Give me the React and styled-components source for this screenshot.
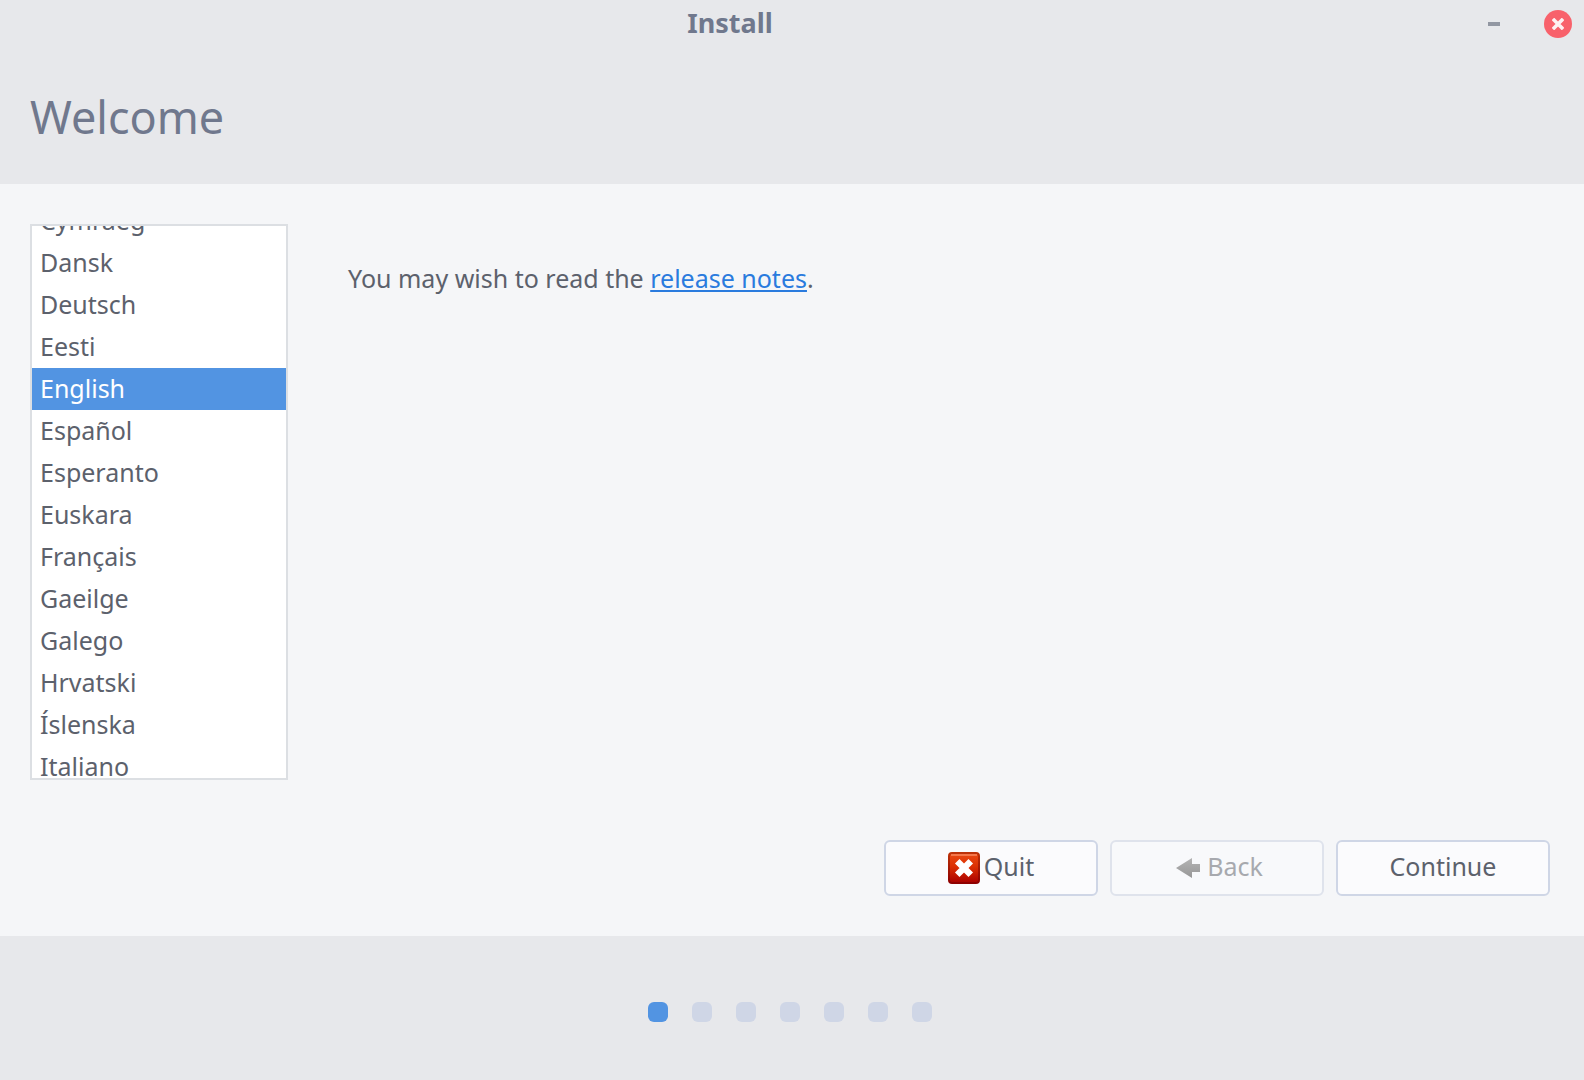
import React, { useLayoutEffect, useRef, useState } from 'react';
import styled, { createGlobalStyle } from 'styled-components';

const GlobalStyle = createGlobalStyle`
  *, *::before, *::after { box-sizing: border-box; }
  body {
    margin: 0;
    background: #f5f6f8;
    color: #5c616c;
    font: 25px/42px "Noto Sans", "Open Sans", sans-serif;
  }
`;

const Window = styled.div`
  display: flex;
  flex-direction: column;
  min-height: 100vh;
`;

const TitleBar = styled.header`
  display: flex;
  align-items: center;
  height: 48px;
  background: #e7e8eb;
`;

const WindowTitle = styled.div`
  flex: 1;
  padding-bottom: 2px;
  color: #70788d;
  font-size: 27px;
  font-weight: 700;
  text-align: center;
`;

const WindowControls = styled.div`
  display: flex;
  align-items: center;
  gap: 38px;
  padding: 0 12px 0 22px;
`;

const ControlButton = styled.button`
  display: flex;
  align-items: center;
  justify-content: center;
  width: ${({ $width }) => $width}px;
  height: 28px;
  margin: 0;
  padding: 0;
  border: 0;
  border-radius: 14px;
  background: ${({ $fill }) => $fill};
`;

const PageHeader = styled.div`
  display: flex;
  align-items: center;
  height: 136px;
  padding: 2px 30px 0;
  background: #e7e8eb;
`;

const PageTitle = styled.h1`
  margin: 0;
  color: #70788d;
  font-size: 45px;
  font-weight: 400;
  line-height: 64px;
`;

const Content = styled.main`
  display: flex;
  flex: 1;
  flex-direction: column;
  justify-content: space-between;
  gap: 60px;
  padding: 40px 34px 40px 30px;
`;

const Columns = styled.div`
  display: flex;
  gap: 60px;
`;

const LanguageList = styled.select`
  flex: none;
  width: 258px;
  height: 556px;
  margin: 0;
  padding: 0;
  overflow-y: auto;
  border: 2px solid #dcdfe3;
  border-radius: 0;
  outline: 0;
  background: #fff;
  color: #5c616c;
  font: inherit;
  scrollbar-width: none;
`;

const Language = styled.option`
  height: 42px;
  min-height: 42px;
  padding: 3px 8px 0;

  &:checked {
    background: #5294e2 linear-gradient(#5294e2, #5294e2);
    color: #fff;
  }
`;

const Notes = styled.p`
  margin: 0;
  padding-top: 33px;
`;

const NotesLink = styled.a`
  color: #2a7bde;
  text-decoration: underline;
  text-decoration-thickness: 2px;
  text-underline-offset: 2px;
  text-decoration-skip-ink: none;
`;

const Actions = styled.div`
  display: flex;
  justify-content: flex-end;
  gap: 12px;
`;

const ActionButton = styled.button`
  display: flex;
  align-items: center;
  justify-content: center;
  gap: 4px;
  width: 214px;
  height: 56px;
  margin: 0;
  padding: 0;
  border: 2px solid #cfd6e6;
  border-radius: 6px;
  background: #fbfbfd;
  color: #5c616c;
  font: inherit;

  &:disabled {
    border-color: #dfe3ec;
    background: #f8f9fb;
    color: #a7a9ae;
  }
`;

const ActionLabel = styled.span`
  padding-bottom: 4px;
`;

const Progress = styled.footer`
  display: flex;
  justify-content: center;
  gap: 24px;
  padding: 66px 4px 58px 0;
  background: #e7e8eb;
`;

const Step = styled.span`
  width: 20px;
  height: 20px;
  border-radius: 6px;
  background: ${({ $current }) => ($current ? '#5294e2' : '#cfd6e6')};
`;

const LANGUAGES = [
  'Cymraeg', 'Dansk', 'Deutsch', 'Eesti', 'English', 'Español', 'Esperanto',
  'Euskara', 'Français', 'Gaeilge', 'Galego', 'Hrvatski', 'Íslenska', 'Italiano',
];

const STEPS = [1, 2, 3, 4, 5, 6, 7];

function MinimizeIcon() {
  return (
    <svg width="12" height="4" viewBox="0 0 12 4" aria-hidden="true">
      <path d="M0 0h12v4H0z" fill="#9297a2" />
    </svg>
  );
}

function CloseIcon() {
  return (
    <svg width="12" height="12" viewBox="0 0 12 12" aria-hidden="true">
      <path d="M2.200 2.200l7.600 7.600M9.800 2.200l-7.600 7.600" stroke="#fdf0f1" strokeWidth="3.6" strokeLinecap="square" />
    </svg>
  );
}

function QuitIcon() {
  return (
    <svg width="32" height="32" viewBox="0 0 32 32" aria-hidden="true">
      <defs>
        <linearGradient id="quit-fill" x1="0" y1="0" x2="0" y2="1">
          <stop offset="0" stopColor="#ea4a12" />
          <stop offset="0.45" stopColor="#dc3003" />
          <stop offset="1" stopColor="#a90000" />
        </linearGradient>
        <linearGradient id="quit-edge" x1="0" y1="0" x2="0" y2="1">
          <stop offset="0" stopColor="#bd3208" />
          <stop offset="1" stopColor="#8e0000" />
        </linearGradient>
      </defs>
      <rect x="1" y="1" width="30" height="30" rx="3" fill="url(#quit-fill)" stroke="url(#quit-edge)" strokeWidth="2" />
      <path d="M3 3h26" stroke="#f4774a" strokeWidth="2" />
      <path d="M11.500 11.500l9 9M20.500 11.500l-9 9" stroke="#fff" strokeWidth="6.4" strokeLinecap="square" />
    </svg>
  );
}

function BackIcon() {
  return (
    <svg width="32" height="32" viewBox="0 0 32 32" aria-hidden="true">
      <defs>
        <linearGradient id="back-fill" x1="0" y1="0" x2="0" y2="1">
          <stop offset="0" stopColor="#b4b4b4" />
          <stop offset="1" stopColor="#979797" />
        </linearGradient>
      </defs>
      <path d="M5 16L21 6v6h8v8h-8v6z" fill="url(#back-fill)" />
    </svg>
  );
}

export default function App() {
  const [language, setLanguage] = useState('English');
  const listRef = useRef(null);

  useLayoutEffect(() => {
    const place = () => {
      if (listRef.current) listRef.current.scrollTop = 26;
    };
    place();
    const frame = requestAnimationFrame(place);
    return () => cancelAnimationFrame(frame);
  }, []);

  return (
    <Window>
      <GlobalStyle />
      <TitleBar>
        <WindowTitle>Install</WindowTitle>
        <WindowControls>
          <ControlButton type="button" aria-label="Minimize" $width={24} $fill="transparent">
            <MinimizeIcon />
          </ControlButton>
          <ControlButton type="button" aria-label="Close" $width={28} $fill="#f8616b">
            <CloseIcon />
          </ControlButton>
        </WindowControls>
      </TitleBar>
      <PageHeader>
        <PageTitle>Welcome</PageTitle>
      </PageHeader>
      <Content>
        <Columns>
          <LanguageList
            ref={listRef}
            size={13}
            aria-label="Language"
            value={language}
            onChange={(event) => setLanguage(event.target.value)}
          >
            {LANGUAGES.map((name) => (
              <Language key={name} value={name}>{name}</Language>
            ))}
          </LanguageList>
          <Notes>
            You may wish to read the <NotesLink href="#release-notes">release notes</NotesLink>.
          </Notes>
        </Columns>
        <Actions>
          <ActionButton type="button">
            <QuitIcon />
            <ActionLabel>Quit</ActionLabel>
          </ActionButton>
          <ActionButton type="button" disabled>
            <BackIcon />
            <ActionLabel>Back</ActionLabel>
          </ActionButton>
          <ActionButton type="button">
            <ActionLabel>Continue</ActionLabel>
          </ActionButton>
        </Actions>
      </Content>
      <Progress>
        {STEPS.map((step) => (
          <Step key={step} $current={step === 1} />
        ))}
      </Progress>
    </Window>
  );
}
